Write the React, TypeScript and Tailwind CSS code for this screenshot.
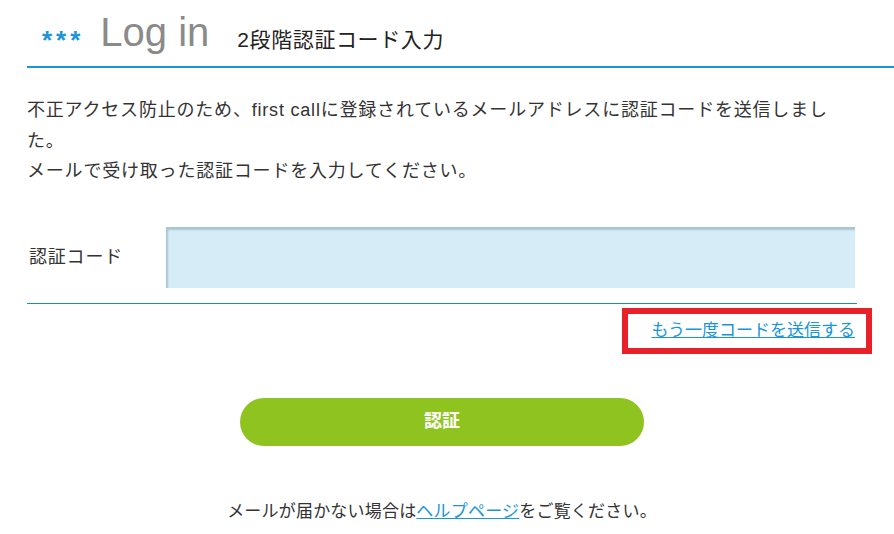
const font = "font-['Liberation_Sans','Noto_Sans_CJK_JP',sans-serif]";

const App = () => {
  return (
    <div className={`${font} bg-white min-h-[534px] pl-[27px] text-[#333]`}>
      <header className="flex items-end h-[68px] border-b-2 border-[#1a96d8] pl-[15px] pb-[14px]">
        <span className="text-[#1a96d8] text-[26px] font-bold tracking-[4px] leading-none mb-[-1px]">***</span>
        <h1 className="ml-[16px] text-[40px] leading-none text-[#8a8a8a]">Log in</h1>
        <span className="ml-[28px] text-[21px] tracking-[0.6px] leading-none text-[#222] mb-[2px]">2段階認証コード入力</span>
      </header>

      <main className="w-[830px]">
        <p className="mt-[27px] text-[18px] tracking-[0.8px] leading-[30.5px] w-[810px]">
          不正アクセス防止のため、first callに登録されているメールアドレスに認証コードを送信しました。
          <br />
          メールで受け取った認証コードを入力してください。
        </p>

        <div className="mt-[40px] flex items-center border-b border-[#1a8ad0] pb-[15px]">
          <label className="w-[139px] pl-[2px] text-[18px] tracking-[0.8px]">認証コード</label>
          <input
            type="text"
            className="w-[689px] h-[61px] bg-[#d6edf8] shadow-[inset_2px_3px_2px_rgba(90,120,140,0.35)] outline-none px-3"
          />
        </div>

        <div className="flex justify-end mt-[4px] mr-[-15px]">
          <div className="border-[6px] border-[#e8202a] pl-[24px] pr-[11px] py-[5px]">
            <a href="#" className="text-[17px] leading-[23px] text-[#1a96d8] underline">
              もう一度コードを送信する
            </a>
          </div>
        </div>

        <div className="flex justify-center mt-[44px]">
          <button className="w-[404px] h-[48px] rounded-full bg-[#8fc31f] text-white font-bold text-[18px]">
            認証
          </button>
        </div>

        <p className="mt-[51px] text-center text-[17px] tracking-[0.2px] leading-[30px]">
          メールが届かない場合は
          <a href="#" className="text-[#1a96d8] underline">ヘルプページ</a>
          をご覧ください。
        </p>
      </main>
    </div>
  );
};

export default App;
